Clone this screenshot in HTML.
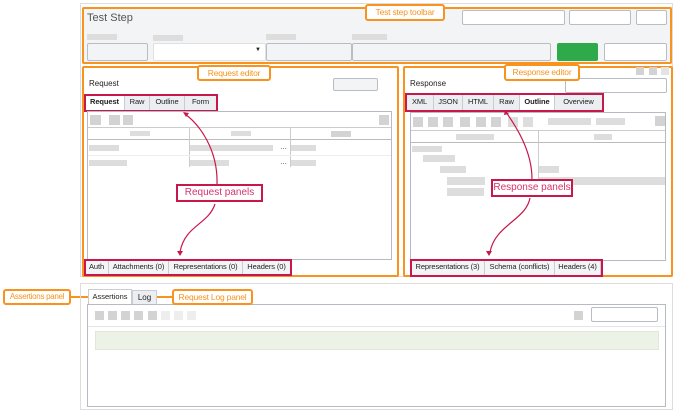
<!DOCTYPE html>
<html><head><style>
*{box-sizing:border-box;margin:0;padding:0}
body{width:674px;height:412px;background:#fff;position:relative;font-family:"Liberation Sans",sans-serif;font-size:8px;color:#222;overflow:hidden}
.a{position:absolute}
.ob{position:absolute;border:2px solid #f7931e;border-radius:2px}
.ol{position:absolute;border:2px solid #f7931e;border-radius:3px;background:#fff;color:#f7931e;font-size:8.5px;letter-spacing:-0.2px;text-align:center;white-space:nowrap}
.rb{position:absolute;border:2px solid #c8174a}
.rl{position:absolute;border:2px solid #c8174a;background:#fff;color:#d6336c;font-size:10px;text-align:center;white-space:nowrap}
.in{position:absolute;border:1px solid #b8bcc4;background:#fff;border-radius:2px}
.g{position:absolute;background:#d3d3d3}
.tab{position:absolute;top:0;height:100%;background:#eceef1;border-right:1px solid #c9ccd2;font-size:7.5px;letter-spacing:-0.1px;text-align:center;line-height:14px;white-space:nowrap}
.box{position:absolute;border:1px solid #b6bac2;background:#fff}
</style></head><body>
<div class="a" style="left:80px;top:3px;width:593px;height:274px;border:1px solid #ddd"></div>
<div class="a" style="left:82px;top:7px;width:590px;height:57px;background:#f3f4f6"></div>
<div class="ob" style="left:82px;top:7px;width:590px;height:57px"></div>
<div class="a" style="left:87px;top:12px;font-size:11px;color:#555">Test Step</div>
<div class="in" style="left:462px;top:10px;width:103px;height:15px"></div>
<div class="in" style="left:569px;top:10px;width:62px;height:15px"></div>
<div class="in" style="left:636px;top:10px;width:31px;height:15px"></div>
<div class="g" style="left:87px;top:34px;width:30px;height:6px;background:#ddd"></div>
<div class="g" style="left:153px;top:35px;width:30px;height:6px;background:#ddd"></div>
<div class="g" style="left:266px;top:34px;width:30px;height:6px;background:#ddd"></div>
<div class="g" style="left:352px;top:34px;width:35px;height:6px;background:#ddd"></div>
<div class="in" style="left:87px;top:43px;width:61px;height:18px;background:#f3f4f6"></div>
<div class="in" style="left:153px;top:43px;width:113px;height:18px;border-color:#e0e0e0"><span class="a" style="right:4px;top:3px;font-size:6px">▼</span></div>
<div class="in" style="left:266px;top:43px;width:86px;height:18px;background:#f3f4f6"></div>
<div class="in" style="left:352px;top:43px;width:199px;height:18px;background:#f3f4f6"></div>
<div class="a" style="left:557px;top:43px;width:41px;height:18px;background:#2eaa4a;border-radius:2px"></div>
<div class="in" style="left:604px;top:43px;width:63px;height:18px"></div>
<div class="ol" style="left:365px;top:4px;width:80px;height:17px;line-height:13px">Test step toolbar</div>

<div class="ob" style="left:82px;top:66px;width:317px;height:211px"></div>
<div class="a" style="left:89px;top:79px">Request</div>
<div class="in" style="left:333px;top:78px;width:45px;height:13px;background:#f3f4f6"></div>
<div class="a" style="left:85px;top:95px;width:132px;height:15px">
<div class="tab" style="left:0;width:40px;background:#fff;font-weight:bold">Request</div>
<div class="tab" style="left:40px;width:25px">Raw</div>
<div class="tab" style="left:65px;width:35px">Outline</div>
<div class="tab" style="left:100px;width:32px">Form</div></div>
<div class="rb" style="left:84px;top:94px;width:134px;height:18px"></div>
<div class="box" style="left:87px;top:111px;width:305px;height:149px"></div>
<div class="g" style="left:90px;top:115px;width:11px;height:10px"></div>
<div class="g" style="left:109px;top:115px;width:11px;height:10px"></div>
<div class="g" style="left:123px;top:115px;width:10px;height:10px"></div>
<div class="g" style="left:379px;top:115px;width:10px;height:10px"></div>
<div class="a" style="left:88px;top:127px;width:303px;height:13px;border-top:1px solid #ccc;border-bottom:1px solid #bbb;background:#fff"></div>
<div class="a" style="left:189px;top:127px;width:1px;height:40px;background:#ccc"></div>
<div class="a" style="left:290px;top:127px;width:1px;height:40px;background:#ccc"></div>
<div class="g" style="left:130px;top:131px;width:20px;height:5px;background:#ddd"></div>
<div class="g" style="left:231px;top:131px;width:20px;height:5px;background:#ddd"></div>
<div class="g" style="left:331px;top:131px;width:20px;height:6px"></div>
<div class="g" style="left:89px;top:145px;width:30px;height:6px;background:#ddd"></div>
<div class="g" style="left:190px;top:145px;width:83px;height:6px;background:#ddd"></div>
<div class="g" style="left:291px;top:145px;width:25px;height:6px;background:#ddd"></div>
<div class="g" style="left:89px;top:160px;width:38px;height:6px;background:#ddd"></div>
<div class="g" style="left:190px;top:160px;width:39px;height:6px;background:#ddd"></div>
<div class="g" style="left:291px;top:160px;width:25px;height:6px;background:#ddd"></div>
<div class="a" style="left:280px;top:144px;font-size:7px">…</div>
<div class="a" style="left:280px;top:159px;font-size:7px">…</div>
<div class="a" style="left:88px;top:155px;width:303px;height:1px;background:#eee"></div>
<div class="a" style="left:85px;top:260px;width:206px;height:15px">
<div class="tab" style="left:0;width:24px;background:#f3f4f6">Auth</div>
<div class="tab" style="left:24px;width:60px;background:#f3f4f6">Attachments (0)</div>
<div class="tab" style="left:84px;width:74px;background:#f3f4f6">Representations (0)</div>
<div class="tab" style="left:158px;width:48px;background:#f3f4f6">Headers (0)</div></div>
<div class="rb" style="left:84px;top:259px;width:208px;height:17px"></div>
<div class="ol" style="left:197px;top:65px;width:74px;height:16px;line-height:12px">Request editor</div>

<div class="ob" style="left:403px;top:66px;width:270px;height:211px"></div>
<div class="g" style="left:636px;top:67px;width:8px;height:8px"></div>
<div class="g" style="left:649px;top:67px;width:8px;height:8px"></div>
<div class="g" style="left:661px;top:67px;width:8px;height:8px;background:#e3e3e3"></div>
<div class="a" style="left:410px;top:79px">Response</div>
<div class="in" style="left:565px;top:78px;width:102px;height:15px"></div>
<div class="a" style="left:406px;top:94px;width:197px;height:16px">
<div class="tab" style="left:0;width:28px;line-height:16px">XML</div>
<div class="tab" style="left:28px;width:29px;line-height:16px">JSON</div>
<div class="tab" style="left:57px;width:31px;line-height:16px">HTML</div>
<div class="tab" style="left:88px;width:26px;line-height:16px">Raw</div>
<div class="tab" style="left:114px;width:35px;background:#fff;font-weight:bold;line-height:16px">Outline</div>
<div class="tab" style="left:149px;width:48px;line-height:16px">Overview</div></div>
<div class="rb" style="left:405px;top:93px;width:199px;height:19px"></div>
<div class="box" style="left:410px;top:112px;width:256px;height:149px"></div>
<div class="g" style="left:413px;top:117px;width:10px;height:10px"></div>
<div class="g" style="left:428px;top:117px;width:10px;height:10px"></div>
<div class="g" style="left:443px;top:117px;width:10px;height:10px"></div>
<div class="g" style="left:460px;top:117px;width:10px;height:10px"></div>
<div class="g" style="left:476px;top:117px;width:10px;height:10px"></div>
<div class="g" style="left:491px;top:117px;width:10px;height:10px"></div>
<div class="g" style="left:508px;top:117px;width:10px;height:10px;background:#ddd"></div>
<div class="g" style="left:523px;top:117px;width:10px;height:10px;background:#ddd"></div>
<div class="g" style="left:548px;top:118px;width:43px;height:7px;background:#ddd"></div>
<div class="g" style="left:596px;top:118px;width:29px;height:7px;background:#ddd"></div>
<div class="g" style="left:655px;top:116px;width:10px;height:10px"></div>
<div class="a" style="left:411px;top:130px;width:254px;height:13px;border-top:1px solid #ccc;border-bottom:1px solid #bbb"></div>
<div class="a" style="left:538px;top:130px;width:1px;height:67px;background:#ccc"></div>
<div class="g" style="left:456px;top:134px;width:38px;height:6px;background:#ddd"></div>
<div class="g" style="left:594px;top:134px;width:18px;height:6px;background:#ddd"></div>
<div class="g" style="left:412px;top:146px;width:30px;height:6px;background:#ddd"></div>
<div class="g" style="left:423px;top:155px;width:32px;height:7px;background:#ddd"></div>
<div class="g" style="left:440px;top:166px;width:26px;height:7px;background:#ddd"></div>
<div class="g" style="left:539px;top:166px;width:20px;height:7px;background:#ddd"></div>
<div class="g" style="left:447px;top:177px;width:38px;height:8px;background:#ddd"></div>
<div class="g" style="left:539px;top:177px;width:126px;height:8px;background:#ddd"></div>
<div class="g" style="left:447px;top:188px;width:37px;height:8px;background:#ddd"></div>
<div class="a" style="left:411px;top:260px;width:190px;height:15px">
<div class="tab" style="left:0;width:74px;background:#f3f4f6">Representations (3)</div>
<div class="tab" style="left:74px;width:70px;background:#f3f4f6">Schema (conflicts)</div>
<div class="tab" style="left:144px;width:46px;background:#f3f4f6">Headers (4)</div></div>
<div class="rb" style="left:410px;top:259px;width:193px;height:18px"></div>
<div class="ol" style="left:504px;top:64px;width:76px;height:17px;line-height:13px">Response editor</div>

<svg class="a" style="left:0;top:0" width="674" height="412">
<g fill="none" stroke="#c8174a" stroke-width="1.2">
<path d="M217 184 C218 150 200 125 185 114"/>
<path d="M215 204 C208 225 185 225 180 252"/>
<path d="M532 179 C532 150 515 125 506 112"/>
<path d="M530 198 C526 220 495 225 490 252"/>
</g>
<g fill="#c8174a">
<path d="M183 112 l6 1 -3 4z"/><path d="M180 256 l-3 -5 6 0z"/>
<path d="M505 110 l4 4 -5 1z"/><path d="M489 256 l-3 -5 6 0z"/>
</g>
<path d="M70 297 H88 M156 297 H172" stroke="#f7931e" stroke-width="2"/>
</svg>
<div class="rl" style="left:176px;top:184px;width:87px;height:18px;line-height:14px">Request panels</div>
<div class="rl" style="left:491px;top:179px;width:82px;height:18px;line-height:14px">Response panels</div>

<div class="a" style="left:80px;top:283px;width:593px;height:127px;border:1px solid #ddd"></div>
<div class="a" style="left:88px;top:289px;width:44px;height:16px;background:#fff;border:1px solid #c9ccd2;border-bottom:none;font-size:7.5px;text-align:center;line-height:14px">Assertions</div>
<div class="a" style="left:132px;top:290px;width:25px;height:15px;background:#eceef1;border:1px solid #c9ccd2;text-align:center;line-height:13px">Log</div>
<div class="box" style="left:87px;top:304px;width:579px;height:103px"></div>
<div class="a" style="left:88px;top:326px;width:577px;height:1px;background:#e5e5e5"></div>
<div class="g" style="left:95px;top:311px;width:9px;height:9px"></div>
<div class="g" style="left:108px;top:311px;width:9px;height:9px"></div>
<div class="g" style="left:121px;top:311px;width:9px;height:9px"></div>
<div class="g" style="left:134px;top:311px;width:9px;height:9px"></div>
<div class="g" style="left:148px;top:311px;width:9px;height:9px"></div>
<div class="g" style="left:161px;top:311px;width:9px;height:9px;background:#eee"></div>
<div class="g" style="left:174px;top:311px;width:9px;height:9px;background:#eee"></div>
<div class="g" style="left:187px;top:311px;width:9px;height:9px;background:#eee"></div>
<div class="g" style="left:574px;top:311px;width:9px;height:9px"></div>
<div class="in" style="left:591px;top:307px;width:67px;height:15px"></div>
<div class="a" style="left:95px;top:331px;width:564px;height:19px;background:#ecf3e6;border:1px solid #e0e6da"></div>
<div class="ol" style="left:3px;top:289px;width:68px;height:16px;line-height:12px;font-size:8px;letter-spacing:-0.3px">Assertions panel</div>
<div class="ol" style="left:172px;top:289px;width:81px;height:16px;line-height:12px">Request Log panel</div>
</body></html>
